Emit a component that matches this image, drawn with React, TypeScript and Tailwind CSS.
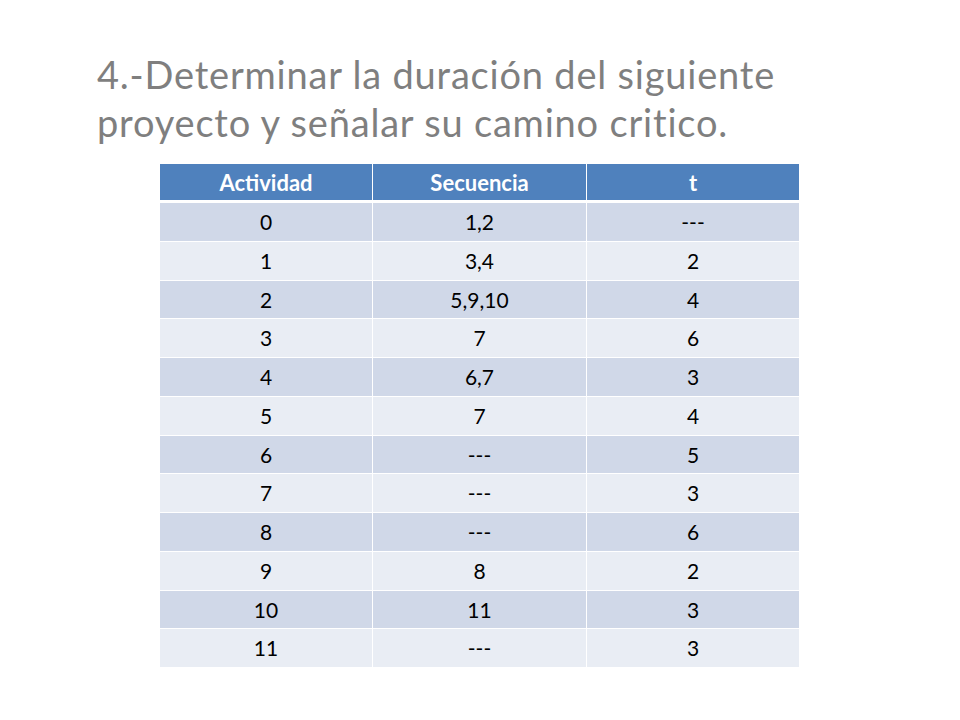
const rows: [string, string, string][] = [
  ['0', '1,2', '---'],
  ['1', '3,4', '2'],
  ['2', '5,9,10', '4'],
  ['3', '7', '6'],
  ['4', '6,7', '3'],
  ['5', '7', '4'],
  ['6', '---', '5'],
  ['7', '---', '3'],
  ['8', '---', '6'],
  ['9', '8', '2'],
  ['10', '11', '3'],
  ['11', '---', '3'],
]

export default function App() {
  return (
    <div className="w-[960px] h-[720px] bg-white font-['Lato','Open_Sans',sans-serif]">
      <div className="pl-[97px] pt-[50px] text-[38px] leading-[48px] tracking-[0.8px] text-[#7f7f7f]">
        <p>4.-Determinar la duración del siguiente</p>
        <p>proyecto y señalar su camino critico.</p>
      </div>
      <div className="ml-[160px] mt-[18px] w-[639px]">
        <div className="grid grid-cols-[213px_214px_212px] h-[39px] border-b-[3px] border-white bg-[#4f81bd] text-white font-bold text-[22px]">
          <div className="flex items-center justify-center border-r border-white">Actividad</div>
          <div className="flex items-center justify-center border-r border-white">Secuencia</div>
          <div className="flex items-center justify-center">t</div>
        </div>
        {rows.map((r, i) => (
          <div
            key={i}
            className={`grid grid-cols-[213px_214px_212px] text-[21px] text-black ${
              i === 0 ? 'h-[37.75px]' : 'h-[38.75px] border-t border-white'
            } ${i % 2 === 0 ? 'bg-[#d0d8e8]' : 'bg-[#e9edf4]'}`}
          >
            <div className="flex items-center justify-center border-r border-white">{r[0]}</div>
            <div className="flex items-center justify-center border-r border-white">{r[1]}</div>
            <div className="flex items-center justify-center">{r[2]}</div>
          </div>
        ))}
      </div>
    </div>
  )
}
